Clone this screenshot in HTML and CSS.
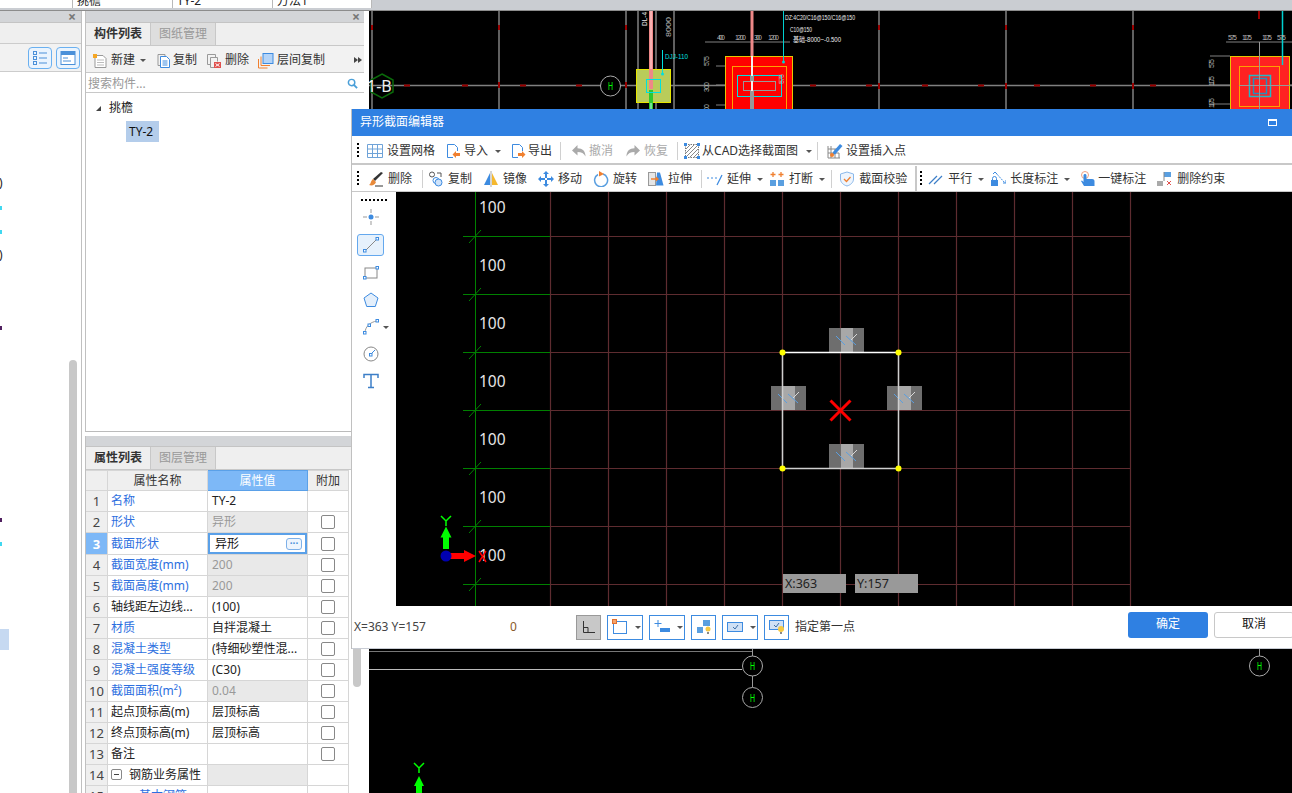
FILE: index.html
```html
<!DOCTYPE html>
<html lang="zh-CN">
<head>
<meta charset="utf-8">
<title>异形截面编辑器</title>
<link rel="stylesheet" href="styles.css">
</head>
<body>
<div class="app">
  <div class="topcells">
    <div class="cell c1"></div>
    <div class="cell c2">挑檐</div>
    <div class="cell c3">TY-2</div>
    <div class="cell c4">方法1</div>
    <div class="topfill"></div>
  </div>
  <div class="main">
    <section class="leftpanel">
      <div class="phead"><span class="x">×</span></div>
      <div class="leftrow"></div>
      <div class="lefttools">
        <span class="viewbtn"><svg viewBox="0 0 16 16" width="16" height="16"><g fill="none" stroke="#4a90d9"><rect x="1.500" y="1.500" width="3" height="3"/><rect x="1.500" y="6.500" width="3" height="3"/><rect x="1.500" y="11.500" width="3" height="3"/><path d="M7 3h8M7 8h8M7 13h8"/></g></svg></span>
        <span class="viewbtn"><svg viewBox="0 0 16 16" width="16" height="16"><rect x="1" y="1.500" width="14" height="13" fill="#fff" stroke="#4a90d9"/><rect x="1" y="1.500" width="14" height="3.500" fill="#4a90d9"/><path d="M3 8h5M3 11h8" stroke="#4a90d9"/></svg></span>
      </div>
      <div class="leftbody">
        <span class="frag f1">)</span><span class="frag f2">)</span>
        <i class="tick cy t1"></i><i class="tick cy t2"></i><i class="tick dk t3"></i><i class="tick dk t4"></i><i class="tick cy t5"></i>
        <i class="lefthl"></i>
        <i class="leftscroll"></i>
      </div>
    </section>
    <div class="midcol">
      <section class="midpanel top">
        <div class="phead"><span class="x">×</span></div>
        <div class="tabs">
          <span class="tab on">构件列表</span><span class="tab">图纸管理</span>
        </div>
        <div class="ptools">
          <span class="pbtn nw"><svg class="ico" viewBox="0 0 16 16"><path d="M3 2.500h8l3 3v9H3z" fill="#fff" stroke="#999"/><path d="M5 7h7M5 9.500h7M5 12h7" stroke="#bbb"/><path d="M1 1h4v4H1z" fill="#f5a623"/></svg>新建<i class="caret"></i></span>
          <span class="pbtn cp"><svg class="ico" viewBox="0 0 16 16"><path d="M2 1.500h7v2" fill="none" stroke="#999"/><path d="M2 1.500v11h2" fill="none" stroke="#999"/><path d="M4.500 3.500h6l3 3v8h-9z" fill="#fff" stroke="#3d8be0"/><path d="M6.500 8h5M6.500 10h5M6.500 12h5" stroke="#3d8be0"/></svg>复制</span>
          <span class="pbtn"><svg class="ico" viewBox="0 0 16 16"><path d="M1.500 1.500h8v3M1.500 1.500v10h3" fill="none" stroke="#999"/><path d="M4.500 4.500h7v4M4.500 4.500v10h4" fill="none" stroke="#999"/><rect x="8" y="9" width="7" height="6" fill="#e0524f"/><path d="M9.500 10.500l4 3M13.500 10.500l-4 3" stroke="#fff"/></svg>删除</span>
          <span class="pbtn"><svg class="ico" viewBox="0 0 16 16"><path d="M.5 6v9h9M3 3.500v9h9" fill="none" stroke="#f08030"/><rect x="5" y=".5" width="10" height="10" fill="#b4d4f8" stroke="#3d8be0"/></svg>层间复制</span>
          <span class="more"><i></i><i></i></span>
        </div>
        <div class="search"><span>搜索构件...</span><svg class="searchico" viewBox="0 0 12 12" width="11" height="11"><circle cx="5" cy="5" r="3.500" fill="none" stroke="#4a9fd8" stroke-width="1.600"/><path d="M7.500 7.500L11 11" stroke="#4a9fd8" stroke-width="2"/></svg></div>
        <div class="tree">
          <div class="node"><i class="tri"></i>挑檐</div>
          <div class="leaf"><span>TY-2</span></div>
        </div>
      </section>
      <section class="midpanel bottom">
        <div class="phead"></div>
        <div class="tabs low">
          <span class="tab on">属性列表</span><span class="tab">图层管理</span>
        </div>
        <table class="props">
          <colgroup><col class="cn"><col class="cname"><col class="cval"><col class="cadd"></colgroup>
          <thead><tr><th></th><th>属性名称</th><th class="hval">属性值</th><th>附加</th></tr></thead>
          <tbody>
            <tr><td class="n">1</td><td class="bl">名称</td><td>TY-2</td><td></td></tr>
            <tr><td class="n">2</td><td class="bl">形状</td><td class="dis">异形</td><td class="ck"><i></i></td></tr>
            <tr><td class="n cur">3</td><td class="bl">截面形状</td><td class="edit"><div class="editbox"><span>异形</span><b class="dots">···</b></div></td><td class="ck"><i></i></td></tr>
            <tr><td class="n">4</td><td class="bl">截面宽度(mm)</td><td class="dis">200</td><td class="ck"><i></i></td></tr>
            <tr><td class="n">5</td><td class="bl">截面高度(mm)</td><td class="dis">200</td><td class="ck"><i></i></td></tr>
            <tr><td class="n">6</td><td>轴线距左边线...</td><td>(100)</td><td class="ck"><i></i></td></tr>
            <tr><td class="n">7</td><td class="bl">材质</td><td>自拌混凝土</td><td class="ck"><i></i></td></tr>
            <tr><td class="n">8</td><td class="bl">混凝土类型</td><td>(特细砂塑性混...</td><td class="ck"><i></i></td></tr>
            <tr><td class="n">9</td><td class="bl">混凝土强度等级</td><td>(C30)</td><td class="ck"><i></i></td></tr>
            <tr><td class="n">10</td><td class="bl">截面面积(m²)</td><td class="dis">0.04</td><td class="ck"><i></i></td></tr>
            <tr><td class="n">11</td><td>起点顶标高(m)</td><td>层顶标高</td><td class="ck"><i></i></td></tr>
            <tr><td class="n">12</td><td>终点顶标高(m)</td><td>层顶标高</td><td class="ck"><i></i></td></tr>
            <tr><td class="n">13</td><td>备注</td><td></td><td class="ck"><i></i></td></tr>
            <tr><td class="n">14</td><td><span class="minus"></span>钢筋业务属性</td><td class="dis"></td><td></td></tr>
            <tr><td class="n">15</td><td class="bl sub">基本钢筋</td><td></td><td></td></tr>
          </tbody>
        </table>
        <i class="midscroll"></i>
      </section>
    </div>
    <div class="cad">
      <svg class="cadsvg" viewBox="369 11 923 782" width="923" height="782">
        <g stroke="#808080" stroke-width="1.500" fill="none">
          <path d="M372 11V109M499 11V109M626 11V109M638 11V109M656 11V109M674 11V109M879 11V109M1006 11V109M1133 11V109M369 85.500H1292"/>
          <path d="M705 42H790M1226 42H1292M716 66H725M716 85H725M716 105H725M1210 56H1230M1210 85H1292M1210 104H1230" stroke-width="1"/>
        </g>
        <path d="M651 11V69" stroke="#e88" stroke-width="4"/><path d="M651 11V69" stroke="#fdd" stroke-width="1"/>
        <path d="M752 11V56" stroke="#e88" stroke-width="3"/>
        <g stroke="#900" stroke-width="2" fill="none">
          <path d="M372 25v5M499 25v5M626 25v5M879 25v5M1006 25v5M1133 25v5M372 82v6M499 82v6M626 82v6M879 83v6M1006 83v6M1133 83v6M1259 11v8"/>
          <path d="M404 85.500h6M462 85.500h6M520 85.500h6M576 85.500h6M810 85.500h6M866 85.500h6M922 85.500h6M978 85.500h6M1034 85.500h6M1090 85.500h6M1150 85.500h6"/>
        </g>
        <path d="M382 74l11 6v12l-11 6-11-6V80z" fill="none" stroke="#0a6a0a" stroke-width="1.500"/>
        <text x="367" y="92" class="t1b">1-B</text>
        <circle cx="610.500" cy="86" r="10" fill="#000" stroke="#aaa"/>
        <text x="610.500" y="90" class="gh" textLength="5" lengthAdjust="spacingAndGlyphs">H</text>
        <rect x="636.500" y="69.500" width="34" height="33" fill="#b9cc5a" stroke="#e6e600"/>
        <path d="M651 69v20" stroke="#e88" stroke-width="4"/>
        <path d="M651 90v19" stroke="#2ec82e" stroke-width="4"/><path d="M651 103v6" stroke="#bff" stroke-width="1"/>
        <rect x="646.500" y="79.500" width="14" height="13" fill="none" stroke="#00e0e0"/>
        <path d="M662.500 50V74" stroke="#00e0e0"/><circle cx="662.500" cy="74" r="1.500" fill="#00e0e0"/>
        <text x="665" y="59" class="cy" textLength="23" lengthAdjust="spacingAndGlyphs">DJJ-110</text>
        <text transform="translate(647 26) rotate(-90)" class="wh" textLength="14" lengthAdjust="spacingAndGlyphs">DL-4</text>
        <text transform="translate(671 37) rotate(-90)" class="gr" textLength="20" lengthAdjust="spacingAndGlyphs">8000</text>
        <rect x="725.500" y="56.500" width="67" height="60" fill="#f00" stroke="#e6c800"/>
        <rect x="732.500" y="66.500" width="54" height="60" fill="none" stroke="#ffa000"/>
        <rect x="737.500" y="75.500" width="44" height="21" fill="none" stroke="#00e0e0"/>
        <rect x="743.500" y="81.500" width="32" height="9" fill="none" stroke="#999"/>
        <path d="M752 56V109" stroke="#f5f0f0" stroke-width="2"/><rect x="750" y="76" width="4" height="5" fill="#999"/><rect x="750" y="91" width="4" height="18" fill="#999"/>
        <path d="M783.500 11V62" stroke="#00d0d0"/><circle cx="783.500" cy="62" r="1.500" fill="#00d0d0"/>
        <text x="785" y="20" class="wh" textLength="70" lengthAdjust="spacingAndGlyphs">DZ:4C20/C16@150/C16@150</text>
        <text x="790" y="32" class="wh" textLength="22" lengthAdjust="spacingAndGlyphs">C10@150</text>
        <text x="793" y="42" class="wh" textLength="48" lengthAdjust="spacingAndGlyphs">基础-8000~-0.500</text>
        <text x="717" y="40" class="gr" textLength="8">400</text><text x="735" y="40" class="gr" textLength="11">1200</text><text x="754" y="40" class="gr" textLength="8">300</text><text x="768" y="40" class="gr" textLength="11">1200</text>
        <text transform="translate(709 66) rotate(-90)" class="gr" textLength="10">575</text><text transform="translate(709 92) rotate(-90)" class="gr" textLength="10">300</text><text transform="translate(709 114) rotate(-90)" class="gr" textLength="10">300</text>
        <text transform="translate(784 84) rotate(-90)" class="gr" textLength="10">575</text>
        <rect x="1230.500" y="56.500" width="59" height="60" fill="#f22" stroke="#e6c800"/>
        <rect x="1239.500" y="66.500" width="40" height="40" fill="none" stroke="#ffa000"/>
        <rect x="1249.500" y="75.500" width="21" height="21" fill="none" stroke="#20b8c8" stroke-width="1.500"/>
        <rect x="1253.500" y="78.500" width="13" height="15" fill="none" stroke="#2090c0" stroke-width="1.500"/>
        <path d="M1259.500 42V109M1239 85.500H1290" stroke="#999"/>
        <path d="M1282.500 11V65" stroke="#00d0d0" stroke-width="1.500"/>
        <text x="1228" y="40" class="gr" textLength="9">575</text><text x="1242" y="40" class="gr" textLength="10">1175</text><text x="1262" y="40" class="gr" textLength="10">1175</text><text x="1277" y="40" class="gr" textLength="9">575</text>
        <text transform="translate(1214 68) rotate(-90)" class="gr" textLength="9">575</text><text transform="translate(1214 86) rotate(-90)" class="gr" textLength="10">1175</text><text transform="translate(1214 108) rotate(-90)" class="gr" textLength="10">1175</text>

        <path d="M369 651.500H752" stroke="#777"/>
        <path d="M369 669.500H742" stroke="#bbb"/>
        <path d="M752.500 649V687M1259.500 649V656" stroke="#999"/>
        <circle cx="752.500" cy="666" r="10" fill="#000" stroke="#aaa"/>
        <circle cx="752.500" cy="697.500" r="10" fill="#000" stroke="#aaa"/>
        <circle cx="1259.500" cy="666" r="10" fill="#000" stroke="#aaa"/>
        <text x="752.500" y="670" class="gh" textLength="5" lengthAdjust="spacingAndGlyphs">H</text><text x="752.500" y="702" class="gh" textLength="5" lengthAdjust="spacingAndGlyphs">H</text><text x="1259.500" y="670" class="gh" textLength="5" lengthAdjust="spacingAndGlyphs">H</text>
        <path d="M414 763l5 5 5-5M419 768v5" fill="none" stroke="#0f0" stroke-width="1.500"/>
        <path d="M419 776l5 10h-2v7h-6v-7h-2z" fill="#0f0"/>
      </svg>
    </div>
  </div>

  <div class="dialog">
    <div class="dtitle"><span>异形截面编辑器</span><i class="maxi"></i></div>
    <div class="tb t-a">
      <i class="grip"></i>
      <span class="btn g4"><svg class="ico" viewBox="0 0 16 16"><path d="M.5 1.500h15v13H.5zM5.500 1.500v13M10.500 1.500v13M.5 6h15M.5 10.500h15" fill="none" stroke="#6fa3d8"/></svg>设置网格</span>
      <span class="btn dd g3"><svg class="ico" viewBox="0 0 16 16"><path d="M2.500 1.500h7l3 3V8M2.500 1.500v13H8" fill="none" stroke="#3d8be0"/><path d="M15 10v3h-4v2l-3.500-3.500L11 8v2z" fill="#f08030"/></svg>导入<i class="caret"></i></span>
      <span class="btn"><svg class="ico" viewBox="0 0 16 16"><path d="M2.500 1.500h7l3 3V8M2.500 1.500v13H8" fill="none" stroke="#3d8be0"/><path d="M8 10v3h4v2l3.500-3.500L12 8v2z" fill="#f08030"/></svg>导出</span>
      <i class="sep s3"></i>
      <span class="btn off"><svg class="ico" viewBox="0 0 16 16"><path d="M6.500 2v3.200c5 0 8 2.800 8 8.300-1.500-3.300-4-4.500-8-4.500v3.500L1 7.500z" fill="#aaa"/></svg>撤消</span>
      <span class="btn off m2 g3"><svg class="ico" viewBox="0 0 16 16"><path d="M9.500 2v3.200c-5 0-8 2.800-8 8.300 1.500-3.300 4-4.500 8-4.500v3.500L15 7.500z" fill="#aaa"/></svg>恢复</span>
      <i class="sep s4"></i>
      <span class="btn dd hatch"><svg class="ico" viewBox="0 0 16 16"><rect x="1.500" y="1.500" width="13" height="13" fill="none" stroke="#777" stroke-dasharray="1.500 1"/><path d="M2 6l4-4M2 10l8-8M2 14L14 2M6 14l8-8M10 14l4-4" stroke="#888"/><path d="M0 0h3v3H0zM13 0h3v3h-3zM0 13h3v3H0zM13 13h3v3h-3z" fill="#3d8be0"/></svg>从CAD选择截面图<i class="caret"></i></span>
      <i class="sep s5"></i>
      <span class="btn m1 g3"><svg class="ico" viewBox="0 0 16 16"><path d="M1 3v12h12M1 6h11M1 10h11M4 3v12M8 6v9M12 10v5" fill="none" stroke="#888"/><path d="M6 9l7-8 2.500 2-7 8-3 1z" fill="#3d8be0"/><circle cx="5" cy="12" r="2" fill="#f08030"/></svg>设置插入点</span>
    </div>
    <div class="tb t-b">
      <i class="grip g2"></i>
      <span class="btn"><svg class="ico" viewBox="0 0 16 16"><path d="M15 2L7 10l-2-2 8-7z" fill="#333"/><path d="M5 8l3 3c-1 3-4 4-7 3 2-1 1.500-4 4-6z" fill="#e88a3a"/><path d="M7 15h8" stroke="#333"/></svg>删除</span>
      <i class="sep s6"></i>
      <span class="btn"><svg class="ico" viewBox="0 0 16 16"><circle cx="4" cy="3.500" r="2.500" fill="none" stroke="#555"/><path d="M9 2h4v4" fill="none" stroke="#555"/><circle cx="8" cy="9.500" r="3" fill="none" stroke="#3d8be0"/><circle cx="10.500" cy="11.500" r="3.500" fill="#cfe3fa" stroke="#3d8be0"/></svg>复制</span>
      <span class="btn"><svg class="ico" viewBox="0 0 16 16"><path d="M7 2v12H1z" fill="#3d8be0"/><path d="M9 2v12h6z" fill="#f5b82e"/><path d="M8 0v16" stroke="#aaa"/></svg>镜像</span>
      <span class="btn"><svg class="ico" viewBox="0 0 16 16"><path d="M8 0l3 3H9v4h4V5l3 3-3 3V9H9v4h2l-3 3-3-3h2V9H3v2L0 8l3-3v2h4V3H5z" fill="#3d8be0"/><path d="M7 7h2v2H7z" fill="#fff"/></svg>移动</span>
      <span class="btn"><svg class="ico" viewBox="0 0 16 16"><path d="M5 3.500A6.500 6.500 0 1 0 10 3" fill="none" stroke="#5a9fe0" stroke-width="1.500"/><path d="M6 0l5 3-5 2.500z" fill="#f08030"/></svg>旋转</span>
      <span class="btn"><svg class="ico" viewBox="0 0 16 16"><rect x=".5" y="1.500" width="7" height="13" fill="#e6e6e6" stroke="#999"/><path d="M9 1.500h3l3.500 13H8z" fill="#3d8be0"/><path d="M3 8h6" stroke="#f08030" stroke-width="1.500"/><path d="M8 5.500L11 8 8 10.500z" fill="#f08030"/></svg>拉伸</span>
      <i class="sep s3"></i>
      <span class="btn dd"><svg class="ico" viewBox="0 0 16 16"><path d="M0 7h2M4 7h2M8 7h2" stroke="#3d8be0"/><path d="M10 14l5-10" stroke="#3d8be0" stroke-width="1.200"/></svg>延伸<i class="caret"></i></span>
      <span class="btn dd"><svg class="ico" viewBox="0 0 16 16"><path d="M1 9h6v6H1zM9 9h6v6H9z" fill="#5a9fe0"/><path d="M4 1v5M1.500 3.500h5M12 1v5M9.500 3.500h5" stroke="#f08030" stroke-width="1.300"/></svg>打断<i class="caret"></i></span>
      <i class="sep s5b"></i>
      <span class="btn"><svg class="ico" viewBox="0 0 16 16"><path d="M8 1l6.500 2v5c0 3.500-3 6-6.500 7-3.500-1-6.500-3.500-6.500-7V3z" fill="#eef5fd" stroke="#8ab8ea"/><path d="M5 8l2.500 2.500L11.500 6" fill="none" stroke="#f08030" stroke-width="1.300"/></svg>截面校验</span>
      <i class="bigsep"></i>
      <i class="grip g3"></i>
      <span class="btn dd"><svg class="ico" viewBox="0 0 16 16"><path d="M1 13L9 5M6 13l8-8" stroke="#3d7fc8" stroke-width="1.200"/></svg>平行<i class="caret"></i></span>
      <span class="btn dd"><svg class="ico" viewBox="0 0 16 16"><rect x="1" y="9" width="7" height="6" fill="#3d8be0"/><path d="M2.500 9V7.500a2 2 0 0 1 4 0V9" fill="none" stroke="#3d8be0"/><path d="M5 1l10 11" stroke="#3d8be0" stroke-dasharray="2 1"/><path d="M3 3l2-2 2 2M13 12h3v-3" fill="none" stroke="#3d8be0"/></svg>长度标注<i class="caret"></i></span>
      <span class="btn key"><svg class="ico" viewBox="0 0 16 16"><circle cx="6" cy="4" r="3.500" fill="none" stroke="#f0a080"/><path d="M4.500 4.500c0-2 3-2 3 0V8H13c2 0 2.500 1 2.500 2.500V15H5L2 10l1-.5 1.500 1.500z" fill="#3d8be0"/></svg>一键标注</span>
      <span class="btn"><svg class="ico" viewBox="0 0 16 16"><path d="M0 10h6v5H0z" fill="#aaa"/><path d="M7 1h7v5H7z" fill="#5a9fe0"/><path d="M7 1v9" stroke="#888"/><path d="M10 10l4 4M14 10l-4 4" stroke="#e0524f"/></svg>删除约束</span>
    </div>
    <div class="dbody">
      <aside class="side">
        <i class="hgrip"></i>
        <span class="sbtn"><svg class="ico" viewBox="0 0 16 16"><circle cx="8" cy="8" r="2.500" fill="#3d8be0"/><path d="M8 0v4M8 12v4M0 8h4M12 8h4" stroke="#999"/></svg></span>
        <span class="sbtn on"><svg class="ico" viewBox="0 0 16 16"><path d="M2 14L14 2" stroke="#888"/><rect x=".5" y="12.500" width="2.500" height="2.500" fill="#fff" stroke="#3d8be0"/><rect x="13" y=".5" width="2.500" height="2.500" fill="#fff" stroke="#3d8be0"/></svg></span>
        <span class="sbtn"><svg class="ico" viewBox="0 0 16 16"><rect x="2" y="3" width="12" height="10" fill="none" stroke="#888"/><rect x=".5" y="11.500" width="2.500" height="2.500" fill="#fff" stroke="#3d8be0"/><rect x="13" y="1.500" width="2.500" height="2.500" fill="#fff" stroke="#3d8be0"/></svg></span>
        <span class="sbtn"><svg class="ico" viewBox="0 0 16 16"><path d="M8 1l7 5-2.700 8.500H3.700L1 6z" fill="#e4effb" stroke="#3d8be0"/></svg></span>
        <span class="sbtn arc"><svg class="ico" viewBox="0 0 16 16"><path d="M2 14C2 8 7 3 14 2" fill="none" stroke="#999"/><rect x=".5" y="12.500" width="2.500" height="2.500" fill="#fff" stroke="#3d8be0"/><rect x="5" y="5" width="2.500" height="2.500" fill="#fff" stroke="#3d8be0"/><rect x="13" y=".5" width="2.500" height="2.500" fill="#fff" stroke="#3d8be0"/></svg><i class="caret small"></i></span>
        <span class="sbtn"><svg class="ico" viewBox="0 0 16 16"><circle cx="8" cy="8" r="7" fill="none" stroke="#888"/><path d="M8 8l4-4" stroke="#3d8be0"/><rect x="6.500" y="7.500" width="2.500" height="2.500" fill="#fff" stroke="#3d8be0"/></svg></span>
        <span class="sbtn"><svg class="ico" viewBox="0 0 16 16"><path d="M1 5V1.500h14V5M8 1.500V14.500M5 14.500h6" fill="none" stroke="#3d7fc8" stroke-width="1.500"/></svg></span>
      </aside>
      <div class="canvas">
        <svg class="gridsvg" viewBox="396 192 896 414" width="896" height="414">
          <g stroke="#5e2c30" stroke-width="1.200" fill="none">
            <path d="M550.500 192V606M608.500 192V606M666.500 192V606M724.500 192V606M782.500 192V606M840.500 192V606M898.500 192V606M956.500 192V606M1014.500 192V606M1072.500 192V606M1130.500 192V606"/>
            <path d="M550 236.500H1131M550 294.500H1131M550 352.500H1131M550 410.500H1131M550 468.500H1131M550 526.500H1131M550 584.500H1131"/>
          </g>
          <g stroke="#008000" fill="none">
            <path d="M475.500 192V606M463 236.500H550M463 294.500H550M463 352.500H550M463 410.500H550M463 468.500H550M463 526.500H550M463 584.500H550"/>
            <path d="M469 243l12-13M469 301l12-13M469 359l12-13M469 417l12-13M469 475l12-13M469 533l12-13M469 591l12-13"/>
          </g>
          <g class="hund">
            <text x="479" y="213">100</text><text x="479" y="271">100</text><text x="479" y="329">100</text><text x="479" y="387">100</text><text x="479" y="445">100</text><text x="479" y="503">100</text><text x="479" y="561">100</text>
          </g>
          <g>
            <g id="mk-src">
              <rect x="829" y="328" width="35" height="24" fill="#6e6e6e"/><rect x="841" y="328" width="12" height="24" fill="#a8a8a8"/>
              <path d="M836 336l9 9M846 336l10 9" stroke="#5a9fe0"/><path d="M851 340l6-6" stroke="#d8d8d8"/>
            </g>
            <use href="#mk-src" x="-58" y="58"/><use href="#mk-src" x="58" y="58"/><use href="#mk-src" y="116"/>
          </g>
          <path d="M782.500 352.500V468.500H898.500V352.500" fill="none" stroke="#cfcfcf" stroke-width="1.500"/>
          <path d="M782 352.500H898" stroke="#fff" stroke-width="1.500"/>
          <g fill="#ff0"><circle cx="782.500" cy="352.500" r="3"/><circle cx="898.500" cy="352.500" r="3"/><circle cx="782.500" cy="468.500" r="3"/><circle cx="898.500" cy="468.500" r="3"/></g>
          <path d="M830.500 400.500l20 20M850.500 400.500l-20 20" stroke="#f00" stroke-width="3"/>
          <path d="M443 537h6v12h-6z" fill="#0f0"/><path d="M446 526.500l5.500 11h-11z" fill="#0f0"/>
          <path d="M441 516l5 5 5-5M446 521v5" fill="none" stroke="#0f0" stroke-width="1.500"/>
          <path d="M450 553h14v6h-14z" fill="#f00"/><path d="M464 550l12 6-12 6z" fill="#f00"/>
          <circle cx="446" cy="556" r="5.500" fill="#0000b0"/>
          <path d="M479 551l7 11M486 551l-7 11" stroke="#f00" stroke-width="1.500"/>
          <rect x="783" y="574" width="63" height="19" fill="#999"/><rect x="855" y="574" width="63" height="19" fill="#999"/>
          <text x="785" y="588" class="xy">X:363</text><text x="857" y="588" class="xy">Y:157</text>
        </svg>
      </div>
    </div>
    <div class="status">
      <span class="coord">X=363 Y=157</span>
      <span class="zero">0</span>
      <div class="tools">
        <span class="tool act"><svg viewBox="0 0 16 16" width="16" height="16"><path d="M2.500 2v11.500H14M2.500 8.500H7v5" fill="none" stroke="#333"/></svg></span>
        <span class="tool wide"><svg viewBox="0 0 16 16" width="16" height="16"><rect x="1.500" y="2.500" width="13" height="12" fill="none" stroke="#3d8be0"/><rect x=".5" y=".5" width="4" height="4" fill="#f5a36a" stroke="#e07030"/></svg><i class="caret"></i></span>
        <span class="tool wide"><svg viewBox="0 0 16 16" width="16" height="16"><path d="M4 1v7M.5 4.500h7" stroke="#3d8be0"/><rect x="6" y="9" width="10" height="4" fill="#3d8be0"/></svg><i class="caret"></i></span>
        <span class="tool"><svg viewBox="0 0 16 16" width="16" height="16"><path d="M7 1h7v6H7zM1 8h6v6H1z" fill="#5a9fe0"/><circle cx="12" cy="10" r="2.500" fill="#f5c842"/><path d="M11 13h2v2h-2z" fill="#888"/></svg></span>
        <span class="tool wide"><svg viewBox="0 0 16 16" width="16" height="16"><rect x=".5" y="3.500" width="15" height="9" fill="#cfe0f5" stroke="#3d8be0"/><path d="M6 8l2 2 3-4" fill="none" stroke="#3d6fa8"/></svg><i class="caret"></i></span>
        <span class="tool"><svg viewBox="0 0 16 16" width="16" height="16"><rect x=".5" y="1.500" width="14" height="9" fill="#cfe0f5" stroke="#3d8be0"/><path d="M5 6l2 2 3-4" fill="none" stroke="#3d6fa8"/><circle cx="12" cy="10" r="3" fill="#f5c842"/><path d="M11 13h2v2h-2z" fill="#888"/></svg></span>
      </div>
      <span class="hint">指定第一点</span>
      <button class="ok">确定</button>
      <button class="cancel">取消</button>
    </div>
  </div>
</div>
</body>
</html>
```
FILE: styles.css
```css
* { box-sizing: border-box; }
html, body { margin: 0; padding: 0; }
body {
  width: 1292px;
  height: 793px;
  overflow: hidden;
  background: #fff;
  font: 12px/1.2 "Noto Sans", "Noto Sans CJK SC", sans-serif;
  color: #333;
}
i { display: block; font-style: normal; }
.app { position: relative; width: 1292px; height: 793px; overflow: hidden; display: flex; flex-direction: column; }

/* top strip */
.topcells { display: flex; height: 11px; background: #cacdd2; border-bottom: 1px solid #8c8c8c; flex: none; }
.cell { height: 8px; overflow: hidden; background: #fff; border-right: 1px solid #b9b9b9; padding-left: 4px; line-height: 2px; color: #222; }
.c1 { width: 73px; }
.c2, .c3 { width: 100px; }
.c4 { width: 99px; }
.topfill { flex: 1; }

.main { flex: 1; display: flex; min-height: 0; }

/* left panel */
.leftpanel { width: 82px; flex: none; border-right: 1px solid #c0c0c0; display: flex; flex-direction: column; }
.phead { height: 12px; background: #d3d5d8; position: relative; flex: none; border-bottom: 1px solid #c4c4c4; }
.phead .x { position: absolute; right: 5px; top: -1px; font-size: 14px; line-height: 14px; font-weight: 700; color: #777; }
.midpanel .phead .x { right: 4px; }
.leftrow { height: 21px; background: #efefef; border-bottom: 1px solid #ccc; flex: none; }
.lefttools { height: 28px; background: #f2f2f2; border-bottom: 1px solid #ccc; flex: none; display: flex; gap: 4px; padding: 3px 0 0 28px; }
.viewbtn { width: 24px; height: 22px; border: 1px solid #6ab0f0; border-radius: 4px; background: #eaf4fe; display: flex; align-items: center; justify-content: center; }
.leftbody { flex: 1; position: relative; background: #fff; }
.frag { position: absolute; left: -1px; font-size: 12px; color: #222; }
.f1 { top: 104px; }
.f2 { top: 176px; }
.tick { position: absolute; left: 0; width: 2px; height: 4px; }
.cy { background: #40d8f0; }
.dk { background: #502060; }
.t1 { top: 134px; }
.t2 { top: 158px; }
.t3 { top: 254px; }
.t4 { top: 446px; }
.t5 { top: 470px; }
.lefthl { position: absolute; left: 0; top: 557px; width: 9px; height: 21px; background: #c6d9f1; }
.leftscroll { position: absolute; left: 69px; top: 288px; width: 8px; bottom: 0; background: #c8c8c8; border-radius: 4px 4px 0 0; }

/* middle column */
.midcol { width: 284px; flex: none; margin-left: 3px; display: flex; flex-direction: column; }
.midpanel { position: relative; }
.midpanel.top { height: 421px; width: 279px; border-left: 1px solid #c0c0c0; border-bottom: 1px solid #bbb; display: flex; flex-direction: column; flex: none; margin-bottom: 4px; }
.midpanel.bottom { flex: 1; border-left: 1px solid #c0c0c0; min-height: 0; overflow: hidden; }
.midpanel.bottom .phead { width: 278px; height: 11px; }
.tabs { height: 23px; background: #efefef; border-bottom: 1px solid #c8c8c8; display: flex; flex: none; }
.tabs.low { width: 266px; }
.tab { width: 65px; height: 22px; background: #dedede; border-right: 1px solid #c8c8c8; color: #999; text-align: center; line-height: 22px; }
.tab.on { background: #efefef; color: #333; font-weight: 700; border-right: 1px solid #c8c8c8; }
.ptools { height: 27px; background: #f2f2f2; border-bottom: 1px solid #c8c8c8; display: flex; align-items: center; padding: 3px 0 0 6px; flex: none; position: relative; color: #333; }
.pbtn { display: flex; align-items: center; gap: 3px; margin-right: 9px; }
.pbtn.nw { margin-right: 10px; }
.pbtn.cp { gap: 1px; }
.ico { width: 16px; height: 16px; flex: none; display: block; }
.more { position: absolute; left: 268px; top: 11px; display: flex; }
.more i { width: 0; height: 0; border-left: 4px solid #444; border-top: 3.500px solid transparent; border-bottom: 3.500px solid transparent; }
.caret { width: 0; height: 0; border-left: 3px solid transparent; border-right: 3px solid transparent; border-top: 3.500px solid #555; flex: none; margin-left: 2px; }
.search { height: 20px; background: #fff; border-bottom: 1px solid #c8c8c8; position: relative; padding-left: 2px; line-height: 22px; color: #999; flex: none; font-size: 12px; }
.searchico { position: absolute; left: 261px; top: 5px; }
.tree { flex: 1; background: #fff; padding: 6px 0 0 10px; color: #222; }
.node { display: flex; align-items: center; height: 18px; gap: 8px; }
.tri { width: 0; height: 0; border-right: 5px solid #444; border-top: 5px solid transparent; }
.leaf { margin: 4px 0 0 30px; }
.leaf span { display: inline-block; width: 33px; height: 21px; background: #b4cdeb; padding-left: 3px; line-height: 21px; color: #111; }

/* property table */
.props { border-collapse: collapse; table-layout: fixed; width: 263px; color: #222; margin-left: -1px; }
.cn { width: 22px; }
.cname, .cval { width: 100px; }
.cadd { width: 41px; }
.props th, .props td { height: 21px; padding: 0 4px; border: 1px solid #d6d6d6; font-weight: 400; white-space: nowrap; overflow: hidden; line-height: 18px; }
.props td:nth-child(2) { padding-left: 3px; }
.props th { height: 20px; background: #efefef; color: #333; text-align: center; }
.props th.hval { background: #7db8f7; color: #fff; border-color: #5aa0e8; }
.props .n { background: #efefef; text-align: center; color: #444; font-size: 13px; padding: 0; }
.props .n.cur { background: #7db8f7; color: #fff; font-weight: 700; }
.bl { color: #2d6fe0; }
.dis { background: #e9e9e9; color: #999; }
.props td.edit { padding: 0; border: 0; position: relative; }
.editbox { height: 21px; border: 2px solid #5aa0e8; display: flex; align-items: center; justify-content: space-between; padding: 0 3px 0 5px; background: #fff; color: #111; }
.dots { width: 16px; height: 12px; border: 1px solid #7db0e8; border-radius: 3px; color: #4a90d9; font-size: 10px; line-height: 9px; text-align: center; font-weight: 700; background: #eef5fd; }
.props .ck { padding: 0; }
.ck i { width: 14px; height: 14px; border: 1px solid #888; border-radius: 2px; margin: 0 auto; background: #fff; }
.minus { display: inline-block; width: 11px; height: 11px; border: 1px solid #888; border-radius: 2px; margin: 0 7px 0 0; vertical-align: -1px; position: relative; }
.minus::after { content: ""; position: absolute; left: 2px; top: 4px; width: 5px; height: 1px; background: #444; }
.props td.sub { padding-left: 31px; }
.midscroll { position: absolute; left: 267px; top: 0; width: 8px; height: 251px; background: #c8c8c8; border-radius: 0 0 4px 4px; }

/* background drawing */
.cad { flex: 1; background: #000; min-width: 0; }
.cadsvg { display: block; }
.cadsvg text { font-family: "Liberation Sans", sans-serif; font-size: 7px; }
.cadsvg .t1b { font-size: 16px; fill: #eee; font-family: "Noto Sans", sans-serif; }
.cadsvg .gh { font-size: 10px; fill: #0f0; text-anchor: middle; }
.cadsvg .cy { fill: #00e0e0; background: none; }
.cadsvg .wh { fill: #eee; }
.cadsvg .gr { fill: #b5b5b5; }

/* dialog window */
.dialog { position: absolute; left: 351px; top: 109px; width: 941px; height: 540px; background: #fff; border-left: 1px solid #c0c0c0; display: flex; flex-direction: column; }
.dtitle { height: 27px; background: #2f80e2; color: #fff; display: flex; align-items: center; justify-content: space-between; padding: 0 15px 0 8px; flex: none; }
.maxi { width: 9px; height: 7px; border: 1px solid #fff; border-top-width: 2px; }
.tb { background: #fff; display: flex; align-items: center; flex: none; border-bottom: 2px solid #c8c8c8; padding-left: 5px; white-space: nowrap; color: #333; }
.tb.t-a { height: 29px; padding-top: 3px; }
.tb.t-b { height: 27px; padding-top: 2px; border-bottom-width: 1px; }
.grip { width: 2px; height: 16px; flex: none; margin-right: 3px; background: repeating-linear-gradient(#000 0 2px, transparent 2px 4px); }
.grip.g2 { margin-right: 4px; }
.grip.g3 { margin: 0 1px 0 3px; }
.btn { display: flex; align-items: center; gap: 2px; padding: 0 5px; flex: none; }
.t-b .btn { gap: 4px; margin-right: 1px; }
.btn.g4 { gap: 4px; }
.btn.g3 { gap: 3px; }
.btn.dd { padding-right: 0; }
.t-a .btn.dd { padding-right: 4px; }
.t-a .btn.dd .caret { margin-left: 4px; }
.t-a .btn.hatch .caret { margin-left: 6px; }
.btn.off { color: #aaa; }
.btn.m1 { margin-left: 1px; }
.btn.m2 { margin-left: 2px; }
.t-b .btn.key { margin-left: 3px; gap: 3px; }
.sep { width: 1px; height: 18px; background: #d0d0d0; flex: none; }
.s3 { margin: 0 5px 0 3px; }
.s4 { margin: 0 1px 0 4px; }
.s5 { margin: 0 3px 0 1px; }
.s5b { margin: 0 2px 0 5px; }
.s6 { margin: 0 0 0 4px; }
.t-b .s3 { margin: 0 0 0 3px; }
.bigsep { width: 2px; height: 27px; background: #c8c8c8; margin-left: 2px; flex: none; }
.dbody { flex: 1; display: flex; min-height: 0; }
.side { width: 44px; flex: none; background: #fff; display: flex; flex-direction: column; align-items: flex-start; padding: 7px 0 0 5px; }
.hgrip { width: 26px; height: 2px; margin: 0 0 5px 4px; background: repeating-linear-gradient(90deg, #000 0 2px, transparent 2px 4px); }
.sbtn { width: 27px; height: 21px; margin-bottom: 6px; display: flex; align-items: center; justify-content: center; position: relative; border-radius: 3px; flex: none; }
.sbtn.on { background: #e6f1fc; border: 1px solid #64a8ee; height: 22px; margin: 1px 0 6px; }
.caret.small { position: absolute; right: -5px; top: 10px; margin: 0; }
.canvas { flex: 1; background: #000; min-width: 0; }
.gridsvg { display: block; }
.hund text { font: 15.500px "Noto Sans", sans-serif; fill: #e6e6e6; }
.gridsvg .xy { font: 12.500px "Noto Sans", sans-serif; fill: #222; }

/* status row */
.status { height: 43px; flex: none; display: flex; align-items: center; background: #fff; border-bottom: 1px solid #c8ccd4; padding-left: 2px; }
.coord { width: 156px; flex: none; color: #444; padding-top: 1px; }
.zero { width: 66px; flex: none; color: #8a5a2a; padding-top: 1px; }
.tools { display: flex; gap: 6px; flex: none; }
.tool { width: 25px; height: 25px; border: 1px solid #3d8be0; display: flex; align-items: center; justify-content: center; background: #fff; flex: none; }
.tool.act { background: #c8c8c8; border-color: #999; }
.tool.wide { width: 36px; justify-content: flex-start; padding-left: 4px; gap: 5px; }
.hint { margin-left: 6px; width: 333px; flex: none; color: #333; padding-top: 1px; }
.ok, .cancel { font: inherit; width: 80px; height: 26px; border-radius: 3px; margin-bottom: 5px; padding: 0; flex: none; }
.ok { background: #2f80e2; color: #fff; border: 0; }
.cancel { background: #fff; color: #111; border: 1px solid #c8c8c8; margin-left: 6px; }
```
